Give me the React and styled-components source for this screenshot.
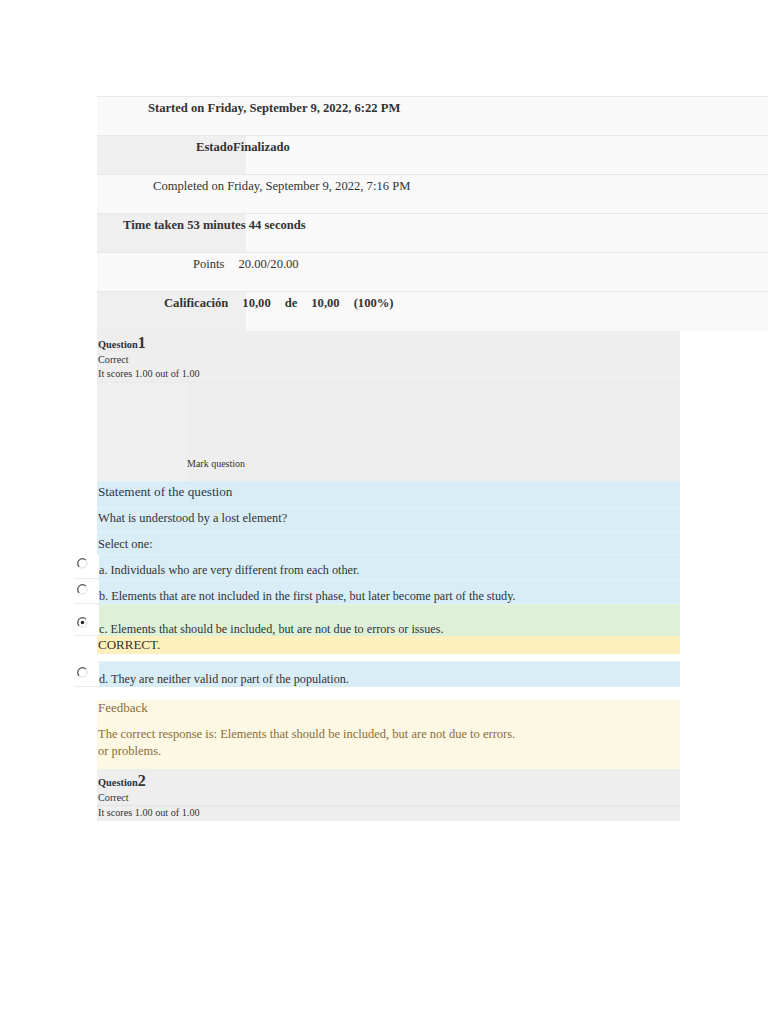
import styled, { createGlobalStyle } from "styled-components";

const GlobalStyle = createGlobalStyle`
  html, body {
    margin: 0;
    padding: 0;
    background: #ffffff;
  }
  body {
    font-family: "Liberation Serif", "Times New Roman", serif;
    color: #333333;
  }
`;

// ── Layout ────────────────────────────────────────────────────────────────────

const Page = styled.div`
  width: 768px;
  min-height: 1024px;
  padding: 96px 0 0 97px;
  box-sizing: border-box;
`;

// ── Summary table ─────────────────────────────────────────────────────────────

const Summary = styled.div`
  width: 671px;
  display: flex;
  flex-direction: column;
`;

const SummaryRow = styled.div`
  display: grid;
  grid-template-columns: 149px 1fr;
  height: ${(p) => p.$h || 39}px;
  background: #f9f9f9;
  border-top: 1px solid #e8e8e8;
  box-sizing: border-box;
`;

const Shade = styled.div`
  grid-area: 1 / 1 / 2 / 2;
  background: ${(p) => (p.$on ? "#efefef" : "transparent")};
`;

const RowText = styled.div`
  grid-area: 1 / 1 / 2 / 3;
  padding: 4px 0 0 ${(p) => p.$indent}px;
  font-size: 12.6px;
  line-height: 15px;
  font-weight: ${(p) => (p.$bold ? 700 : 400)};
  white-space: nowrap;
`;

const Gap = styled.span`
  margin-left: ${(p) => p.$w}px;
`;

// ── Question ──────────────────────────────────────────────────────────────────

const Question = styled.div`
  width: 583px;
  display: flex;
  flex-direction: column;
`;

const Info = styled.div`
  background: #eeeeee;
  padding: 4px 1px 1px;
  display: flex;
  flex-direction: column;
`;

const QNo = styled.div`
  font-weight: 700;
  font-size: 10.4px;
  line-height: 16px;
  span {
    font-size: 16px;
  }
`;

const State = styled.div`
  font-size: 10.2px;
  line-height: 14px;
  ${(p) => p.$line && "border-top: 1px solid #e4e4e4; margin: 0 -1px; padding: 0 1px;"}
`;

const Flags = styled.div`
  height: 99px;
  display: grid;
  grid-template-columns: 90px 1fr;
  background: #eeeeee;
  border-top: 1px solid #e9e9e9;
  box-sizing: border-box;
`;

const FlagsLeft = styled.div`
  background: #f0f0f0;
`;

const MarkLink = styled.div`
  align-self: end;
  font-size: 10px;
  line-height: 14px;
  padding-bottom: 10px;
`;

const Content = styled.div`
  display: flex;
  flex-direction: column;
`;

const Line = styled.div`
  height: ${(p) => p.$h}px;
  box-sizing: border-box;
  background: ${(p) => p.$bg || "#d9edf7"};
  border-top: 1px solid ${(p) => p.$edge || "#e3f1f9"};
  padding: ${(p) => p.$pt || 0}px 1px 0;
  font-size: ${(p) => p.$size || 12.4}px;
  line-height: 15px;
  color: ${(p) => p.$color || "#333333"};
`;

const Option = styled.div`
  height: ${(p) => p.$h}px;
  box-sizing: border-box;
  background: ${(p) => (p.$right ? "#dff0d8" : "#d9edf7")};
  border-top: 1px solid ${(p) => (p.$right ? "#e5f3df" : "#e3f1f9")};
  margin-top: ${(p) => p.$mt || 0}px;
  display: flex;
  align-items: stretch;
`;

const RadioBox = styled.div`
  width: 25px;
  margin-left: -23px;
  flex-shrink: 0;
  background: #ffffff;
  border-bottom: 1px solid #eaeaea;
  display: flex;
  align-items: flex-end;
  padding: 0 0 ${(p) => p.$pb}px 3px;
  box-sizing: border-box;
`;

const OptionText = styled.div`
  align-self: flex-end;
  font-size: 12.2px;
  line-height: 14px;
  padding-bottom: ${(p) => p.$pb}px;
`;

const Feedback = styled.div`
  margin-top: 13px;
  background: #fcf8e3;
  color: #8a6d3b;
  padding: 0 1px 9px;
  display: flex;
  flex-direction: column;
`;

const FeedbackTitle = styled.div`
  font-size: 13px;
  line-height: 14px;
  padding-top: 1px;
`;

const FeedbackText = styled.div`
  margin-top: 11px;
  font-size: 12.5px;
  line-height: 17px;
`;

// ── Pieces ────────────────────────────────────────────────────────────────────

function Radio({ checked }) {
  return (
    <svg width="11" height="11" viewBox="0 0 12 12">
      <circle cx="6" cy="6" r="5" fill="#ffffff" stroke="#d4d4d4" strokeWidth="1" />
      <path d="M2.3 9.7 A5 5 0 0 1 9.7 2.3" fill="none" stroke="#555555" strokeWidth="1.3" />
      {checked && <circle cx="6" cy="6" r="1.9" fill="#222222" />}
    </svg>
  );
}

const OPTIONS = [
  { text: "a. Individuals who are very different from each other.", h: 25, pb: 2 },
  {
    text: "b. Elements that are not included in the first phase, but later become part of the study.",
    h: 25,
    pb: 1,
  },
  { text: "c. Elements that should be included, but are not due to errors or issues.", h: 32, pb: 0, right: true },
];

export default function App() {
  return (
    <>
      <GlobalStyle />
      <Page>
        <Summary>
          <SummaryRow>
            <Shade />
            <RowText $indent={51} $bold>
              Started on Friday, September 9, 2022, 6:22 PM
            </RowText>
          </SummaryRow>
          <SummaryRow>
            <Shade $on />
            <RowText $indent={99} $bold>
              EstadoFinalizado
            </RowText>
          </SummaryRow>
          <SummaryRow>
            <Shade />
            <RowText $indent={56}>Completed on Friday, September 9, 2022, 7:16 PM</RowText>
          </SummaryRow>
          <SummaryRow>
            <Shade $on />
            <RowText $indent={26} $bold>
              Time taken 53 minutes 44 seconds
            </RowText>
          </SummaryRow>
          <SummaryRow>
            <Shade />
            <RowText $indent={96}>
              Points<Gap $w={14}>20.00/20.00</Gap>
            </RowText>
          </SummaryRow>
          <SummaryRow $h={40}>
            <Shade $on />
            <RowText $indent={67} $bold>
              Calificación<Gap $w={14}>10,00</Gap>
              <Gap $w={14}>de</Gap>
              <Gap $w={14}>10,00</Gap>
              <Gap $w={14}>(100%)</Gap>
            </RowText>
          </SummaryRow>
        </Summary>

        <Question>
          <Info>
            <QNo>
              Question<span>1</span>
            </QNo>
            <State>Correct</State>
            <State>It scores 1.00 out of 1.00</State>
          </Info>
          <Flags>
            <FlagsLeft />
            <MarkLink>Mark question</MarkLink>
          </Flags>

          <Content>
            <Line $h={26} $pt={2} $size={13.2} $color="#2b3a47">
              Statement of the question
            </Line>
            <Line $h={24} $pt={3}>
              What is understood by a lost element?
            </Line>
            <Line $h={23} $pt={5}>
              Select one:
            </Line>
            {OPTIONS.map((o) => (
              <Option key={o.text} $h={o.h} $right={o.right}>
                <RadioBox $pb={o.pb + 7}>
                  <Radio checked={o.right} />
                </RadioBox>
                <OptionText $pb={o.pb}>{o.text}</OptionText>
              </Option>
            ))}
            <Line $h={18} $pt={0} $bg="#fdf0bd" $edge="#fdf0bd" $size={13}>
              CORRECT.
            </Line>
            <Option $h={26} $mt={7}>
              <RadioBox $pb={8}>
                <Radio />
              </RadioBox>
              <OptionText $pb={1}>d. They are neither valid nor part of the population.</OptionText>
            </Option>
          </Content>

          <Feedback>
            <FeedbackTitle>Feedback</FeedbackTitle>
            <FeedbackText>
              The correct response is: Elements that should be included, but are not due to errors.
              <br />
              or problems.
            </FeedbackText>
          </Feedback>

          <Info>
            <QNo>
              Question<span>2</span>
            </QNo>
            <State>Correct</State>
            <State $line>It scores 1.00 out of 1.00</State>
          </Info>
        </Question>
      </Page>
    </>
  );
}
